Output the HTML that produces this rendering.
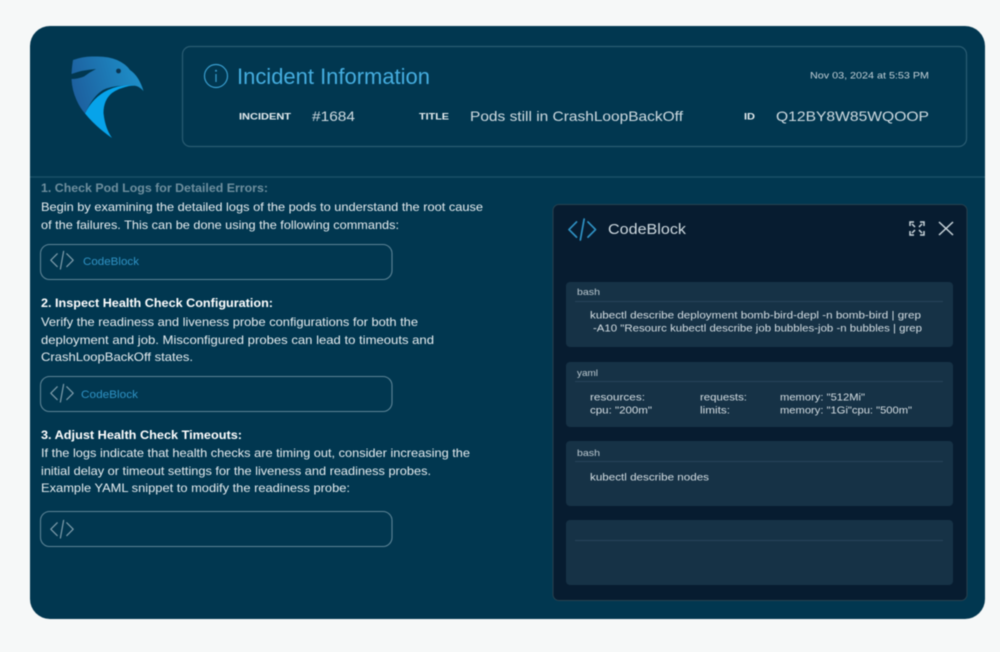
<!DOCTYPE html>
<html lang="en">
<head>
<meta charset="utf-8">
<title>Incident Information</title>
<style>
html,body{margin:0;padding:0;background:#f6f8f8;width:1000px;height:652px;overflow:hidden}
svg{display:block;filter:blur(.55px)}
text{font-family:"Liberation Sans",sans-serif;white-space:pre}
.b{fill:#e6edf0;font-size:12px}
.h{fill:#fff;font-size:12px;font-weight:bold}
.c{fill:#d6dfe4;font-size:10.5px}
.l{fill:#bccad1;font-size:9.5px}
.k{fill:#e6edf0;font-size:9px;font-weight:bold}
.v{fill:#cfdbe1;font-size:14px}
.lk{fill:#2f92c4;font-size:11px}
</style>
</head>
<body>
<svg width="1000" height="652" viewBox="0 0 1000 652" xmlns="http://www.w3.org/2000/svg">
<defs>
<linearGradient id="g" x1="72" y1="90" x2="143" y2="70" gradientUnits="userSpaceOnUse">
<stop offset="0" stop-color="#1d5f9e"/><stop offset="1" stop-color="#1e92cb"/>
</linearGradient>
<g id="code" fill="none" stroke-linecap="round" stroke-linejoin="round">
<path d="M9 1 L1 9 L9 17 M21 1 L29 9 L21 17 M17 -2 L13 20"/>
</g>
</defs>
<rect width="1000" height="652" fill="#f6f8f8"/>
<rect x="30" y="26" width="955" height="593" rx="20" fill="#013750"/>
<line x1="30" y1="177" x2="985" y2="177" stroke="#1f5369" stroke-width="1.2"/>

<path d="M73 60 Q84 56 94 56.500 Q108 56 117 60 Q126 64 130 70 Q139 76 143.500 91 Q139 86 135 85.700 L123 85.700 Q111 86 103 90 Q93 96 85 113.500 Q80 108 76.500 100 Q72 90 71.500 79 Q78 79 84 76.500 Q90 72 96 69 Q82 70 71.500 74 Q72 66 73 60 Z" fill="url(#g)"/>
<path d="M135 85 Q118 85 108 90 Q93 97 85 113.500 Q96 127 112 138 Q105 128 103.500 113 Q103.500 100 112 93 Q120 87 135 85 Z" fill="#07a3ea"/>
<circle cx="118.500" cy="71" r="2.400" fill="#0a3552"/>

<rect x="182.500" y="46.500" width="784" height="100" rx="8" fill="none" stroke="#2a5c72" stroke-width="1.200"/>
<circle cx="216" cy="76" r="11.500" fill="none" stroke="#3a9fd0" stroke-width="1.200"/>
<circle cx="216" cy="70.800" r="1" fill="#3a9fd0"/>
<line x1="216" y1="74" x2="216" y2="82" stroke="#3a9fd0" stroke-width="1.200"/>
<text x="237" y="84" font-size="22" fill="#45addf" textLength="193" lengthAdjust="spacingAndGlyphs">Incident Information</text>
<text x="810" y="78.500" font-size="9.500" fill="#c3d1d8" textLength="119" lengthAdjust="spacingAndGlyphs">Nov 03, 2024 at 5:53 PM</text>
<text class="k" x="239" y="119.500" textLength="52" lengthAdjust="spacingAndGlyphs">INCIDENT</text>
<text class="v" x="312" y="121" textLength="43" lengthAdjust="spacingAndGlyphs">#1684</text>
<text class="k" x="419" y="119.500" textLength="30" lengthAdjust="spacingAndGlyphs">TITLE</text>
<text class="v" x="470" y="121" textLength="213" lengthAdjust="spacingAndGlyphs">Pods still in CrashLoopBackOff</text>
<text class="k" x="744" y="119.500" textLength="11" lengthAdjust="spacingAndGlyphs">ID</text>
<text class="v" x="776" y="121" textLength="153" lengthAdjust="spacingAndGlyphs">Q12BY8W85WQOOP</text>

<text class="h" x="41" y="192" style="fill:#6f8f9e" textLength="227" lengthAdjust="spacingAndGlyphs">1. Check Pod Logs for Detailed Errors:</text>
<text class="b" x="41" y="211" textLength="442" lengthAdjust="spacingAndGlyphs">Begin by examining the detailed logs of the pods to understand the root cause</text>
<text class="b" x="41" y="229" textLength="358" lengthAdjust="spacingAndGlyphs">of the failures. This can be done using the following commands:</text>
<rect x="40.500" y="244.500" width="351.500" height="35" rx="9" fill="none" stroke="#5d8496" stroke-width="1.100"/>
<use href="#code" transform="translate(50,253) scale(.8)" stroke="#7f9dab" stroke-width="1.500"/>
<text class="lk" x="83" y="265" textLength="56" lengthAdjust="spacingAndGlyphs">CodeBlock</text>

<text class="h" x="41" y="307" textLength="232" lengthAdjust="spacingAndGlyphs">2. Inspect Health Check Configuration:</text>
<text class="b" x="41" y="326" textLength="377" lengthAdjust="spacingAndGlyphs">Verify the readiness and liveness probe configurations for both the</text>
<text class="b" x="41" y="344" textLength="393" lengthAdjust="spacingAndGlyphs">deployment and job. Misconfigured probes can lead to timeouts and</text>
<text class="b" x="41" y="361" textLength="152" lengthAdjust="spacingAndGlyphs">CrashLoopBackOff states.</text>
<rect x="40.500" y="376.500" width="351.500" height="35" rx="9" fill="none" stroke="#5d8496" stroke-width="1.100"/>
<use href="#code" transform="translate(50,386) scale(.8)" stroke="#7f9dab" stroke-width="1.500"/>
<text class="lk" x="81" y="398" textLength="57" lengthAdjust="spacingAndGlyphs">CodeBlock</text>

<text class="h" x="41" y="439" textLength="201" lengthAdjust="spacingAndGlyphs">3. Adjust Health Check Timeouts:</text>
<text class="b" x="41" y="457" textLength="429" lengthAdjust="spacingAndGlyphs">If the logs indicate that health checks are timing out, consider increasing the</text>
<text class="b" x="41" y="475" textLength="390" lengthAdjust="spacingAndGlyphs">initial delay or timeout settings for the liveness and readiness probes.</text>
<text class="b" x="41" y="492" textLength="309" lengthAdjust="spacingAndGlyphs">Example YAML snippet to modify the readiness probe:</text>
<rect x="40.500" y="511.500" width="351.500" height="35" rx="9" fill="none" stroke="#5d8496" stroke-width="1.100"/>
<use href="#code" transform="translate(50,522) scale(.8)" stroke="#7f9dab" stroke-width="1.500"/>

<rect x="553" y="204.500" width="414" height="396" rx="6" fill="#071c30" stroke="#27414f" stroke-width="1"/>
<use href="#code" transform="translate(568,221) scale(.95)" stroke="#2f92c4" stroke-width="1.800"/>
<text x="608" y="234" font-size="15" fill="#cfdae0" textLength="78" lengthAdjust="spacingAndGlyphs">CodeBlock</text>
<g fill="none" stroke="#c9d4da" stroke-width="1.500">
<path d="M910 226 V222 H914 M920 222 H924 V226 M924 231 V235 H920 M914 235 H910 V231"/>
<path d="M912 224 L915 227 M922 224 L919 227 M922 233 L919 230 M912 233 L915 230"/>
<path d="M939 222 L953 235 M953 222 L939 235"/>
</g>

<g fill="#163246">
<rect x="566" y="282" width="387" height="65" rx="4"/>
<rect x="566" y="362" width="387" height="65" rx="4"/>
<rect x="566" y="441" width="387" height="65" rx="4"/>
<rect x="566" y="520" width="387" height="65" rx="4"/>
</g>
<g stroke="#27445a" stroke-width="1">
<line x1="575" y1="301.500" x2="943" y2="301.500"/>
<line x1="575" y1="381.500" x2="943" y2="381.500"/>
<line x1="575" y1="461.500" x2="943" y2="461.500"/>
<line x1="575" y1="540.500" x2="943" y2="540.500"/>
</g>

<text class="l" x="577" y="295" textLength="23" lengthAdjust="spacingAndGlyphs">bash</text>
<text class="c" x="590" y="318.500" textLength="331" lengthAdjust="spacingAndGlyphs">kubectl describe deployment bomb-bird-depl -n bomb-bird | grep</text>
<text class="c" x="593" y="331.500" textLength="329" lengthAdjust="spacingAndGlyphs">-A10 "Resourc kubectl describe job bubbles-job -n bubbles | grep</text>

<text class="l" x="577" y="376" textLength="21" lengthAdjust="spacingAndGlyphs">yaml</text>
<text class="c" x="590" y="400.500" textLength="55" lengthAdjust="spacingAndGlyphs">resources:</text>
<text class="c" x="700" y="400.500" textLength="47" lengthAdjust="spacingAndGlyphs">requests:</text>
<text class="c" x="780" y="400.500" textLength="85" lengthAdjust="spacingAndGlyphs">memory: "512Mi"</text>
<text class="c" x="590" y="413.500" textLength="62" lengthAdjust="spacingAndGlyphs">cpu: "200m"</text>
<text class="c" x="700" y="413.500" textLength="30" lengthAdjust="spacingAndGlyphs">limits:</text>
<text class="c" x="780" y="413.500" textLength="132" lengthAdjust="spacingAndGlyphs">memory: "1Gi"cpu: "500m"</text>

<text class="l" x="577" y="456" textLength="23" lengthAdjust="spacingAndGlyphs">bash</text>
<text class="c" x="590" y="480.500" textLength="119" lengthAdjust="spacingAndGlyphs">kubectl describe nodes</text>
</svg>
</body>
</html>
